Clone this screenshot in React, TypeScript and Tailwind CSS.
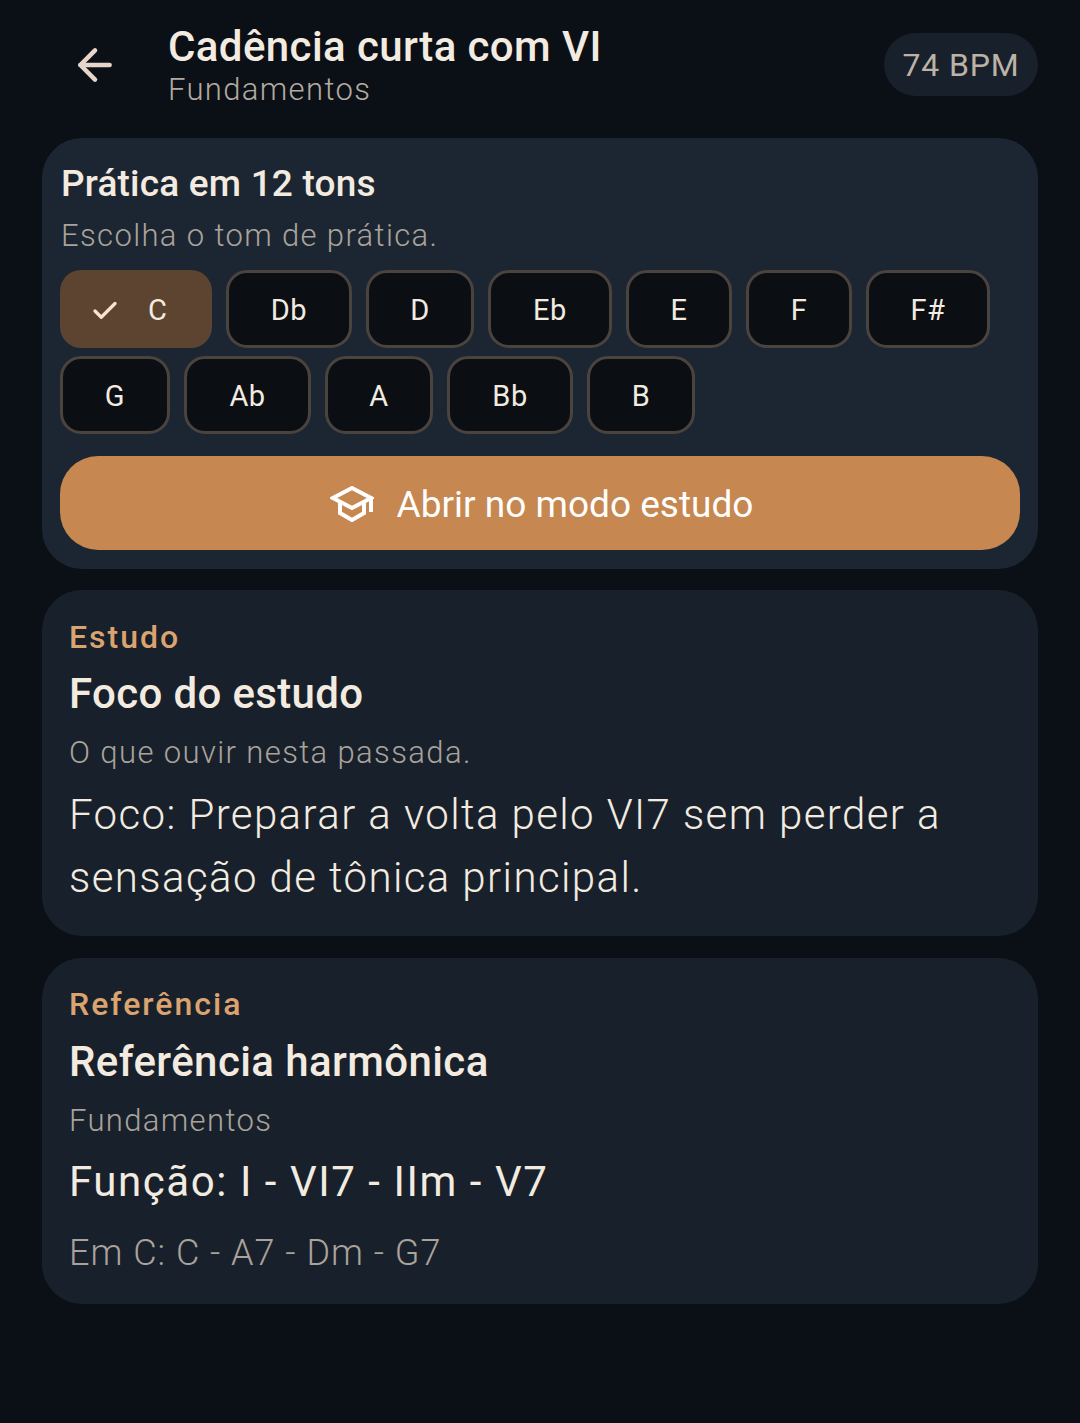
import { ArrowLeft, Check } from "lucide-react";

const firstRow = [
  { label: "Db", width: "w-[126px]" },
  { label: "D", width: "w-[108px]" },
  { label: "Eb", width: "w-[124px]" },
  { label: "E", width: "w-[106px]" },
  { label: "F", width: "w-[106px]" },
  { label: "F#", width: "w-[124px]" },
];

const secondRow = [
  { label: "G", width: "w-[110px]" },
  { label: "Ab", width: "w-[127px]" },
  { label: "A", width: "w-[108px]" },
  { label: "Bb", width: "w-[126px]" },
  { label: "B", width: "w-[108px]" },
];

function KeyChip({ label, width }: { label: string; width: string }) {
  return (
    <button
      className={`flex h-[78px] ${width} items-center justify-center rounded-[21px] border-[3px] border-[#4b433d] bg-[#0b0f14] pt-[3px] text-[29px] tracking-[0.5px] text-[#f3ebe0]`}
    >
      {label}
    </button>
  );
}

function GraduationIcon() {
  return (
    <svg width="44" height="36" viewBox="0 0 44 36" fill="none" stroke="#ffffff" strokeWidth="4" className="-mt-[2px]">
      <path d="M22 2 L41 12 L22 22 L3 12 Z" strokeLinejoin="miter" />
      <path d="M10 17 V27 L22 34 L34 27 V17" />
      <path d="M41 11 V26" />
    </svg>
  );
}

export default function App() {
  return (
    <div className="min-h-[1423px] bg-[#0b1017] px-[42px] font-['Roboto',sans-serif] text-[#f3ebe0]">
      <header className="flex h-[138px] items-start">
        <div className="ml-[28px] mt-[40px] w-[99px]">
          <ArrowLeft size={50} strokeWidth={2.2} className="text-[#e6d5c8]" />
        </div>
        <div className="mt-[22px] flex-1">
          <h1 className="-ml-[1px] text-[42px] font-medium leading-[50px] tracking-[0.4px]">Cadência curta com VI</h1>
          <p className="-ml-[1px] mt-[1px] text-[31px] font-light leading-[34px] tracking-[1.35px] text-[#b3aaa0]">Fundamentos</p>
        </div>
        <div className="mt-[33px] flex h-[63px] w-[154px] items-center justify-center rounded-full bg-[#18212b] text-[32px] tracking-[0.85px] text-[#bdb2a6]">
          74 BPM
        </div>
      </header>

      <section className="rounded-[40px] bg-[#1c2632] px-[18px] pb-[19px] pt-[24px]">
        <h2 className="ml-[1px] text-[37px] font-medium leading-[44px] tracking-[0.2px]">Prática em 12 tons</h2>
        <p className="ml-[1px] mt-[10px] text-[31px] font-light leading-[40px] tracking-[1.36px] text-[#aaa39b]">Escolha o tom de prática.</p>
        <div className="mt-[14px] flex gap-[14px]">
          <button className="flex h-[78px] w-[152px] items-center justify-center gap-[28px] rounded-[21px] bg-[#5c4431] pr-[15px] pt-[3px] text-[29px] text-[#f3ebe0]">
            <Check size={30} strokeWidth={2.6} className="text-[#fde3cd]" />
            C
          </button>
          {firstRow.map((key) => (
            <KeyChip key={key.label} label={key.label} width={key.width} />
          ))}
        </div>
        <div className="mt-[8px] flex gap-[14px]">
          {secondRow.map((key) => (
            <KeyChip key={key.label} label={key.label} width={key.width} />
          ))}
        </div>
        <button className="mt-[22px] flex h-[94px] w-full items-center justify-center gap-[23px] rounded-[38px] bg-[#c78750] pl-[3px] pt-[4px] text-[37px] font-normal text-white">
          <GraduationIcon />
          Abrir no modo estudo
        </button>
      </section>

      <section className="mt-[21px] h-[346px] rounded-[40px] bg-[#18212b] px-[27px] pt-[28px]">
        <p className="text-[32px] font-medium leading-[38px] tracking-[2px] text-[#dba36f]">Estudo</p>
        <h2 className="mt-[13px] text-[42px] font-medium leading-[50px] tracking-[0.35px]">Foco do estudo</h2>
        <p className="mt-[14px] text-[31px] font-light leading-[40px] tracking-[1.38px] text-[#aaa39b]">O que ouvir nesta passada.</p>
        <p className="mt-[10px] text-[42px] font-light leading-[63px] tracking-[1.4px]">
          Foco: Preparar a volta pelo VI7 sem perder a sensação de tônica principal.
        </p>
      </section>

      <section className="mt-[22px] h-[346px] rounded-[40px] bg-[#18212b] px-[27px] pt-[27px]">
        <p className="text-[32px] font-medium leading-[38px] tracking-[2px] text-[#dba36f]">Referência</p>
        <h2 className="mt-[14px] text-[42px] font-medium leading-[50px] tracking-[0.4px]">Referência harmônica</h2>
        <p className="mt-[14px] text-[31px] font-light leading-[40px] tracking-[1.35px] text-[#aaa39b]">Fundamentos</p>
        <p className="mt-[11px] text-[42px] leading-[60px] tracking-[1.55px]">Função: I - VI7 - IIm - V7</p>
        <p className="mt-[16px] text-[36px] font-light leading-[50px] tracking-[1px] text-[#aaa39b]">Em C: C - A7 - Dm - G7</p>
      </section>
    </div>
  );
}
